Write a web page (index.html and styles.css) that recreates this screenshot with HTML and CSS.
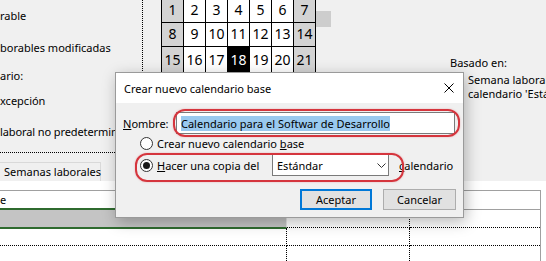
FILE: index.html
```html
<!DOCTYPE html>
<html lang="es">
<head>
<meta charset="utf-8">
<title>Crear nuevo calendario base</title>
<link rel="stylesheet" href="styles.css">
</head>
<body>
<div class="app">
  <div class="top">
    <div class="legend">
      <div class="lg l1">rable</div>
      <div class="lg l2">borables modificadas</div>
      <div class="lg l3">ario:</div>
      <div class="lg l4">xcepción</div>
      <div class="lg l5">laboral no predetermin</div>
    </div>
    <div class="calwrap">
      <div class="cal">
        <div class="d we">1</div><div class="d">2</div><div class="d">3</div><div class="d">4</div><div class="d">5</div><div class="d">6</div><div class="d we">7</div>
        <div class="d we">8</div><div class="d">9</div><div class="d">10</div><div class="d">11</div><div class="d">12</div><div class="d">13</div><div class="d we">14</div>
        <div class="d we">15</div><div class="d">16</div><div class="d">17</div><div class="d today">18</div><div class="d">19</div><div class="d">20</div><div class="d we">21</div>
      </div>
      <div class="thumb"></div>
    </div>
    <div class="based">
      <div class="based-label">Basado en:</div>
      <div class="based-text">Semana laboral predeterminada en el<br>calendario 'Estándar'.</div>
    </div>
  </div>
  <div class="tabs"><div class="tab">Semanas laborales</div></div>
  <div class="sheet">
    <div class="table">
      <div class="thead"><div class="th">e</div></div>
      <div class="trow"><div class="td c1 selected"></div><div class="td c2"></div><div class="td c3"></div></div>
      <div class="trow"><div class="td c1"></div><div class="td c2"></div><div class="td c3"></div></div>
      <div class="trow last"><div class="td c1"></div><div class="td c2"></div><div class="td c3"></div></div>
    </div>
  </div>

  <div class="dialog">
    <div class="dlg-title">
      <span>Crear nuevo calendario base</span>
      <svg class="close" width="10" height="10" viewBox="0 0 10 10"><path d="M0.5 0.5 L9.5 9.5 M9.5 0.5 L0.5 9.5" stroke="#000" stroke-width="1" fill="none"/></svg>
    </div>
    <div class="dlg-body">
      <div class="name-row">
        <span class="name-label"><u>N</u>ombre:</span>
        <div class="textbox"><span class="hl">Calendario para el Softwar de Desarrollo</span></div>
      </div>
      <div class="radio-row r1">
        <span class="radio"></span>
        <span>Crear nuevo calendario <u>b</u>ase</span>
      </div>
      <div class="radio-row r2">
        <span class="radio checked"></span>
        <span class="copy-label"><u>H</u>acer una copia del</span>
        <div class="combo"><span>Estándar</span>
          <svg class="chev" width="9" height="5" viewBox="0 0 9 5"><path d="M0.5 0.5 L4.5 4.5 L8.5 0.5" stroke="#333" stroke-width="1" fill="none"/></svg>
        </div>
        <span class="cal-label"><u>c</u>alendario</span>
      </div>
      <div class="buttons">
        <div class="btn primary">Aceptar</div>
        <div class="btn">Cancelar</div>
      </div>
    </div>
    <div class="mark m1"></div>
    <div class="mark m2"></div>
  </div>
</div>
</body>
</html>
```
FILE: styles.css
```css
* { box-sizing: border-box; }
html, body { margin: 0; padding: 0; }
body {
  width: 546px;
  height: 261px;
  overflow: hidden;
  background: #f0f0f0;
  font-family: "Noto Sans", sans-serif;
  font-size: 11px;
  color: #000;
}
.app { position: relative; width: 546px; height: 261px; overflow: hidden; }

.top { display: flex; height: 153px; }
.legend {
  width: 143px;
  flex: none;
  border-right: 1px dotted #000;
  border-bottom: 1px dotted #000;
  white-space: nowrap;
  overflow: hidden;
}
.lg { line-height: 16px; height: 16px; }
.l1 { margin-top: 8px; }
.l2 { margin-top: 16px; }
.l3 { margin-top: 12px; }
.l4 { margin-top: 9px; }
.l5 { margin-top: 15px; letter-spacing: -0.1px; }

.calwrap { display: flex; margin-left: 18px; align-items: flex-start; flex: none; }
.cal {
  display: grid;
  grid-template-columns: repeat(7, 21px);
  grid-template-rows: 23px 23px 26px;
  gap: 1px;
  background: #000;
  border-left: 1px solid #000;
  border-right: 1px solid #000;
  margin-top: -1px;
}
.d {
  background: #fff;
  display: flex;
  align-items: center;
  justify-content: center;
  font-size: 14px;
  padding-bottom: 2px;
}
.d.we { background: #d3d3d3; }
.d.today { background: #000; color: #fff; }
.thumb { width: 15px; height: 16px; margin-top: 11px; background: #cdcdcd; flex: none; }

.based { margin-left: 119px; padding-top: 55px; white-space: nowrap; flex: none; }
.based-label { line-height: 16px; }
.based-text { margin-left: 18px; margin-top: 2px; line-height: 14px; }

.tabs { margin-top: 9px; height: 19px; display: flex; }
.tab {
  margin-left: -1px;
  width: 102px;
  height: 19px;
  border: 1px solid #d9d9d9;
  border-bottom: none;
  padding-left: 4px;
  line-height: 18px;
  white-space: nowrap;
}

.sheet { background: #fff; height: 80px; padding-top: 9px; }
.table { width: 541px; border-right: 1px solid #a0a0a0; height: 71px; }
.thead {
  height: 20px;
  border-top: 1px solid #a0a0a0;
  border-bottom: 1px solid #a0a0a0;
}
.th { line-height: 18px; padding-left: 0; }
.trow { display: grid; grid-template-columns: 287px 123px 1fr; height: 18px; }
.trow.last { height: 15px; }
.td { border-bottom: 1px dotted #000; }
.trow.last .td { border-bottom: none; }
.c1, .c2 { border-right: 1px dotted #000; }
.td.selected {
  background: #c4c4c4;
  border-right: 1px solid #e4e4e4;
  border-bottom: 1px solid #2f6b2f;
  box-shadow: 0 -2px 0 #2f6b2f, 0 1px 0 #2f6b2f;
}

.dialog {
  position: absolute;
  left: 115px;
  top: 72px;
  width: 349px;
  height: 146px;
  border: 1px solid #9a9a9a;
  background: #f0f0f0;
  box-shadow: 2px 4px 14px rgba(0, 0, 0, 0.28);
}
.dlg-title {
  height: 30px;
  background: #fff;
  display: flex;
  align-items: center;
  justify-content: space-between;
  padding-left: 8px;
  padding-right: 9px;
  font-size: 11px;
}
.close { display: block; }
.dlg-body { padding: 9px 7px 7px 7px; }

.name-row { display: flex; align-items: center; height: 22px; }
.name-label { width: 53px; flex: none; }
.textbox {
  width: 279px;
  height: 22px;
  border: 1px solid #7a7a7a;
  background: #fff;
  padding-left: 4px;
  display: flex;
  align-items: center;
  white-space: nowrap;
}
.hl { background: #99c9ef; line-height: 15px; }

.radio-row { display: flex; align-items: center; padding-left: 17px; white-space: nowrap; }
.r1 { height: 18px; }
.r2 { height: 22px; margin-top: 2px; }
.radio {
  width: 13px;
  height: 13px;
  border: 1px solid #333;
  border-radius: 50%;
  background: #fff;
  margin-right: 4px;
  flex: none;
  display: flex;
  align-items: center;
  justify-content: center;
}
.radio.checked::after {
  content: "";
  width: 7px;
  height: 7px;
  border-radius: 50%;
  background: #1a1a1a;
}
.copy-label { width: 115px; flex: none; }
.combo {
  width: 117px;
  height: 22px;
  border: 1px solid #7a7a7a;
  background: #fff;
  display: flex;
  align-items: center;
  justify-content: space-between;
  padding-left: 4px;
  padding-right: 2px;
  flex: none;
}
.chev { display: block; }
.cal-label { margin-left: 10px; }

.buttons { display: flex; justify-content: flex-end; gap: 11px; margin-top: 13px; }
.btn {
  width: 73px;
  height: 21px;
  border: 1px solid #adadad;
  background: #e1e1e1;
  display: flex;
  align-items: center;
  justify-content: center;
}
.btn.primary { width: 72px; border: 2px solid #0078d7; }

.mark {
  position: absolute;
  border: 2px solid #d5353d;
  border-radius: 12px;
  box-shadow: 0 0 2px rgba(213, 53, 61, 0.35);
}
.m1 { left: 57px; top: 36px; width: 287px; height: 28px; }
.m2 { left: 19px; top: 80px; width: 269px; height: 29px; }
```
